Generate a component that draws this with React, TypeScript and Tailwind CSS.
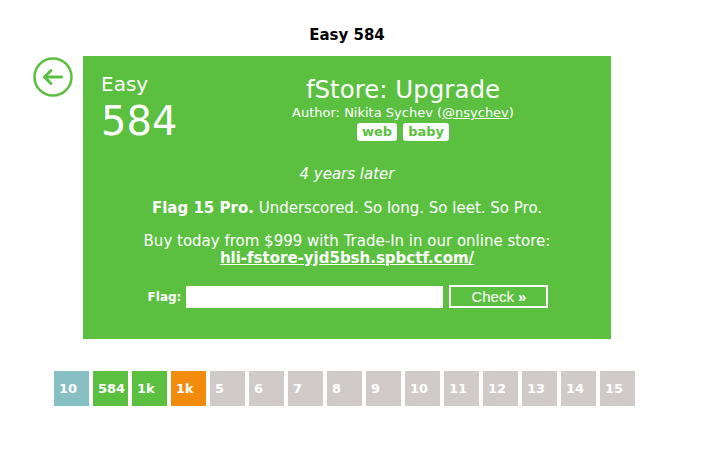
const tiles = [
  { label: "10", color: "bg-[#88bfc5]" },
  { label: "584", color: "bg-[#5bbf40]" },
  { label: "1k", color: "bg-[#5bbf40]" },
  { label: "1k", color: "bg-[#f28b0c]" },
  { label: "5", color: "bg-[#d0cac8]" },
  { label: "6", color: "bg-[#d0cac8]" },
  { label: "7", color: "bg-[#d0cac8]" },
  { label: "8", color: "bg-[#d0cac8]" },
  { label: "9", color: "bg-[#d0cac8]" },
  { label: "10", color: "bg-[#d0cac8]" },
  { label: "11", color: "bg-[#d0cac8]" },
  { label: "12", color: "bg-[#d0cac8]" },
  { label: "13", color: "bg-[#d0cac8]" },
  { label: "14", color: "bg-[#d0cac8]" },
  { label: "15", color: "bg-[#d0cac8]" },
];

export default function App() {
  return (
    <div className="min-h-[450px] w-[708px] bg-white pt-[25px] font-['DejaVu_Sans',Verdana,sans-serif]">
      <div className="ml-[83px] w-[528px] text-center text-[15px] font-bold leading-[20px] text-black">
        Easy 584
      </div>

      <div className="mt-[11px] flex">
        <a className="ml-[33px] mr-[10px] mt-[1px] block h-[40px] w-[40px] shrink-0" href="#">
          <svg viewBox="0 0 40 40" width="40" height="40" fill="none" stroke="#5bbf40" strokeWidth="2.5">
            <circle cx="20" cy="20" r="18.5" />
            <path d="M11.5 20 H28.5" strokeWidth="3" strokeLinecap="round" />
            <path d="M18 13.5 L11.5 20 L18 26.5" strokeWidth="3" strokeLinecap="round" strokeLinejoin="round" />
          </svg>
        </a>

        <div className="w-[528px] bg-[#5bbf40] pb-[31px] text-white">
          <div className="flex">
            <div className="w-[112px] shrink-0 pl-[18px] pt-[16px]">
              <div className="text-[20px] leading-[24px]">Easy</div>
              <div className="mt-[2px] text-[40px] leading-[46px]">584</div>
            </div>
            <div className="flex-1 pt-[20px] text-center">
              <div className="text-[24.5px] leading-[28px]">fStore: Upgrade</div>
              <div className="mt-[1px] text-[13px] leading-[16px]">
                Author: Nikita Sychev (<a className="underline" href="#">@nsychev</a>)
              </div>
              <div className="mt-[2px] flex justify-center gap-[6px]">
                <span className="rounded-[3px] bg-white px-[5px] text-[13px] font-bold leading-[18px] text-[#5bbf40]">web</span>
                <span className="rounded-[3px] bg-white px-[5px] text-[13px] font-bold leading-[18px] text-[#5bbf40]">baby</span>
              </div>
            </div>
          </div>

          <div className="mt-[21px] text-center text-[15px] italic leading-[18px]">4 years later</div>

          <div className="mt-[16px] text-center text-[15px] leading-[18px]">
            <b>Flag 15 Pro.</b> Underscored. So long. So leet. So Pro.
          </div>

          <div className="mt-[16px] text-center text-[15px] leading-[17px]">
            Buy today from $999 with Trade-In in our online store:
            <br />
            <a className="font-bold underline" href="#">hli-fstore-yjd5bsh.spbctf.com/</a>
          </div>

          <div className="ml-[2px] mt-[18px] flex items-center justify-center">
            <label className="mr-[5px] text-[12px] font-bold">Flag:</label>
            <input className="h-[22px] w-[257px] border-0 bg-white px-1 text-[13px] text-black outline-none" type="text" />
            <button className="ml-[6px] h-[23px] w-[99px] border-2 border-white bg-transparent font-['Liberation_Sans',Arial,sans-serif] text-[15px] leading-none text-white">
              Check <b>»</b>
            </button>
          </div>
        </div>
      </div>

      <div className="ml-[54px] mt-[32px] flex gap-[4px]">
        {tiles.map((t, i) => (
          <div
            className={`flex h-[35px] w-[35px] items-center pl-[5px] text-[13px] font-bold text-white ${t.color}`}
            key={i}
          >
            {t.label}
          </div>
        ))}
      </div>
    </div>
  );
}
